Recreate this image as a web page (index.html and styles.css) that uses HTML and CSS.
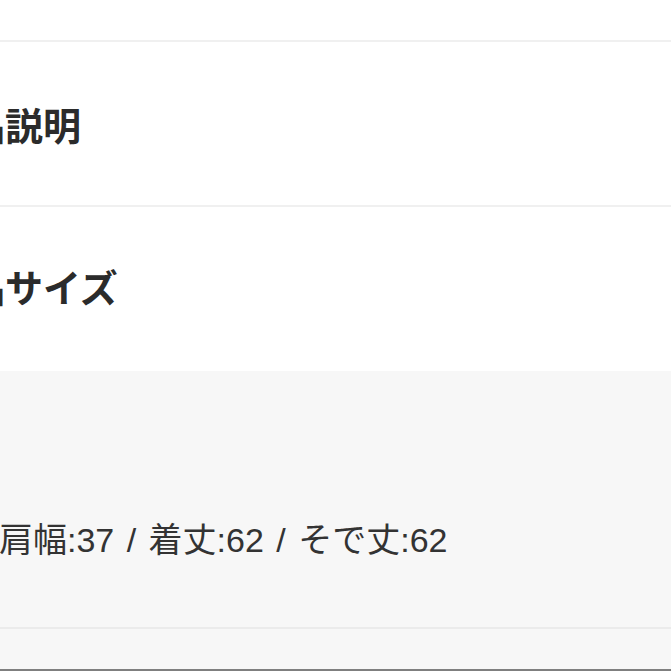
FILE: index.html
```html
<!DOCTYPE html>
<html lang="ja">
<head>
<meta charset="utf-8">
<link rel="stylesheet" href="styles.css">
</head>
<body>
<div class="sheet">
  <div class="top"></div>
  <section class="block block-first">
    <h2 class="heading">商品説明</h2>
  </section>
  <section class="block block-second">
    <h2 class="heading">商品サイズ</h2>
  </section>
  <div class="detail">
    <p class="detail-text">肩幅:37 / 着丈:62 / そで丈:62</p>
  </div>
  <div class="detail-foot"></div>
  <div class="bottom-bar"></div>
</div>
</body>
</html>
```

FILE: styles.css
```css
html, body {
  margin: 0;
  padding: 0;
  background: #ffffff;
  overflow: hidden;
}
body {
  width: 671px;
  height: 671px;
  font-family: "Liberation Sans", "Noto Sans CJK JP", sans-serif;
  color: #333333;
}
.sheet {
  display: flex;
  flex-direction: column;
  margin-left: -71px;
  width: 742px;
}
.top {
  height: 40px;
  border-bottom: 2px solid #f0f0f0;
}
.block {
  box-sizing: border-box;
  border-bottom: 2px solid #f0f0f0;
}
.block-first {
  height: 165px;
  padding-top: 58px;
}
.block-second {
  height: 164px;
  padding-top: 55px;
  border-bottom: none;
}
.heading {
  margin: 0;
  font-size: 38px;
  line-height: 54px;
  font-weight: 700;
  color: #2b2b2b;
}
.detail {
  box-sizing: border-box;
  height: 258px;
  background: #f7f7f7;
  padding-top: 144px;
  padding-left: 70px;
  border-bottom: 2px solid #ebebeb;
}
.detail-text {
  margin: 0;
  font-size: 34px;
  line-height: 50px;
  word-spacing: 3px;
  color: #333333;
}
.detail-foot {
  height: 40px;
  background: #f7f7f7;
}
.bottom-bar {
  height: 2px;
  background: #7f7f7f;
}
```
